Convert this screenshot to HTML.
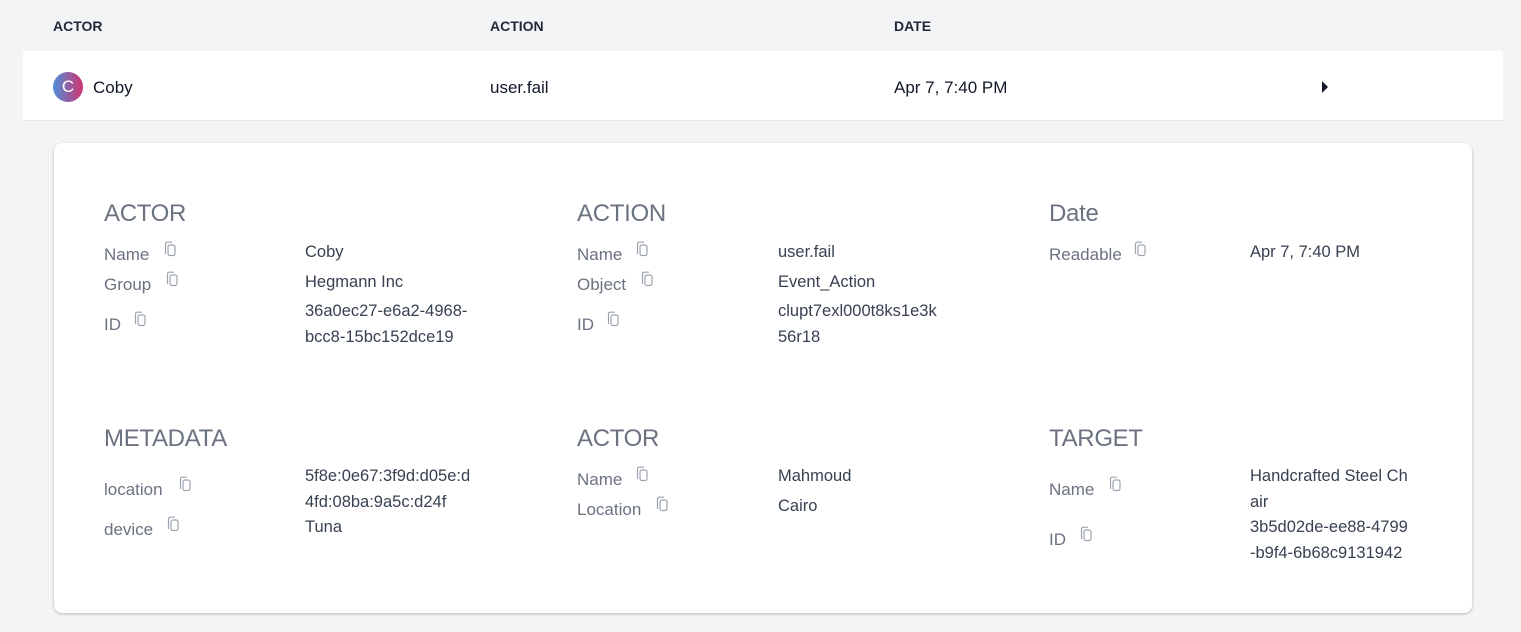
<!DOCTYPE html>
<html><head><style>
*{margin:0;padding:0;box-sizing:border-box}
body{width:1521px;height:632px;background:#f3f4f6;font-family:"Liberation Sans",sans-serif;position:relative;overflow:hidden;color:#111827}
.a{position:absolute;white-space:nowrap}
.h{font-size:14px;font-weight:bold;color:#1f2937;top:18px}
.row{position:absolute;left:23px;top:51px;width:1480px;height:70px;background:#fff;border-bottom:1px solid #e5e7eb}
.card{position:absolute;left:54px;top:143px;width:1418px;height:470px;background:#fff;border-radius:8px;box-shadow:0 1px 3px rgba(0,0,0,.18),0 1px 2px rgba(0,0,0,.08)}
.t{font-size:24px;color:#6b7280;letter-spacing:-0.3px}
.l{font-size:17px;color:#6b7280;line-height:26px}
.v{font-size:16.5px;color:#374151;line-height:26px}
.c{position:absolute;width:14px;height:17px}
</style></head><body>
<div class="a h" style="left:53px">ACTOR</div>
<div class="a h" style="left:490px">ACTION</div>
<div class="a h" style="left:894px">DATE</div>
<div class="row"></div>
<div class="a" style="left:53px;top:72px;width:30px;height:30px;border-radius:50%;background:linear-gradient(90deg,#4f8fdc,#d0336f);color:#fff;font-size:17px;text-align:center;line-height:30px">C</div>
<div class="a" style="left:93px;top:78px;font-size:17px">Coby</div>
<div class="a" style="left:490px;top:78px;font-size:17px">user.fail</div>
<div class="a" style="left:894px;top:78px;font-size:17px">Apr 7, 7:40 PM</div>
<svg class="a" style="left:1321px;top:80px" width="8" height="14"><path d="M1 1L7 7L1 13Z" fill="#111827"/></svg>
<div class="card"></div>
<svg width="0" height="0" style="position:absolute"><defs><g id="cp" fill="none" stroke="#9ca3af" stroke-width="1.2"><path d="M2.5 13V3Q2.5 1.2 4.3 1.2H9"/><rect x="5" y="4" width="7" height="10.5" rx="2"/></g></defs></svg>
<div class="a t" style="left:104px;top:200px">ACTOR</div>
<div class="a l" style="left:104px;top:242px">Name</div><svg class="c" style="left:163px;top:241px"><use href="#cp"/></svg>
<div class="a v" style="left:305px;top:239px">Coby</div>
<div class="a l" style="left:104px;top:272px">Group</div><svg class="c" style="left:165px;top:271px"><use href="#cp"/></svg>
<div class="a v" style="left:305px;top:269px">Hegmann Inc</div>
<div class="a l" style="left:104px;top:312px">ID</div><svg class="c" style="left:133px;top:311px"><use href="#cp"/></svg>
<div class="a v" style="left:305px;top:298px">36a0ec27-e6a2-4968-<br>bcc8-15bc152dce19</div>
<div class="a t" style="left:577px;top:200px">ACTION</div>
<div class="a l" style="left:577px;top:242px">Name</div><svg class="c" style="left:635px;top:241px"><use href="#cp"/></svg>
<div class="a v" style="left:778px;top:239px">user.fail</div>
<div class="a l" style="left:577px;top:272px">Object</div><svg class="c" style="left:640px;top:271px"><use href="#cp"/></svg>
<div class="a v" style="left:778px;top:269px">Event_Action</div>
<div class="a l" style="left:577px;top:312px">ID</div><svg class="c" style="left:606px;top:311px"><use href="#cp"/></svg>
<div class="a v" style="left:778px;top:298px">clupt7exl000t8ks1e3k<br>56r18</div>
<div class="a t" style="left:1049px;top:200px">Date</div>
<div class="a l" style="left:1049px;top:242px">Readable</div><svg class="c" style="left:1133px;top:241px"><use href="#cp"/></svg>
<div class="a v" style="left:1250px;top:239px">Apr 7, 7:40 PM</div>
<div class="a t" style="left:104px;top:425px">METADATA</div>
<div class="a l" style="left:104px;top:477px">location</div><svg class="c" style="left:178px;top:476px"><use href="#cp"/></svg>
<div class="a v" style="left:305px;top:463px">5f8e:0e67:3f9d:d05e:d<br>4fd:08ba:9a5c:d24f</div>
<div class="a l" style="left:104px;top:517px">device</div><svg class="c" style="left:166px;top:516px"><use href="#cp"/></svg>
<div class="a v" style="left:305px;top:514px">Tuna</div>
<div class="a t" style="left:577px;top:425px">ACTOR</div>
<div class="a l" style="left:577px;top:467px">Name</div><svg class="c" style="left:635px;top:466px"><use href="#cp"/></svg>
<div class="a v" style="left:778px;top:463px">Mahmoud</div>
<div class="a l" style="left:577px;top:497px">Location</div><svg class="c" style="left:655px;top:496px"><use href="#cp"/></svg>
<div class="a v" style="left:778px;top:493px">Cairo</div>
<div class="a t" style="left:1049px;top:425px">TARGET</div>
<div class="a l" style="left:1049px;top:477px">Name</div><svg class="c" style="left:1108px;top:476px"><use href="#cp"/></svg>
<div class="a v" style="left:1250px;top:463px">Handcrafted Steel Ch<br>air</div>
<div class="a l" style="left:1049px;top:527px">ID</div><svg class="c" style="left:1079px;top:526px"><use href="#cp"/></svg>
<div class="a v" style="left:1250px;top:514px">3b5d02de-ee88-4799<br>-b9f4-6b68c9131942</div>
</body></html>
